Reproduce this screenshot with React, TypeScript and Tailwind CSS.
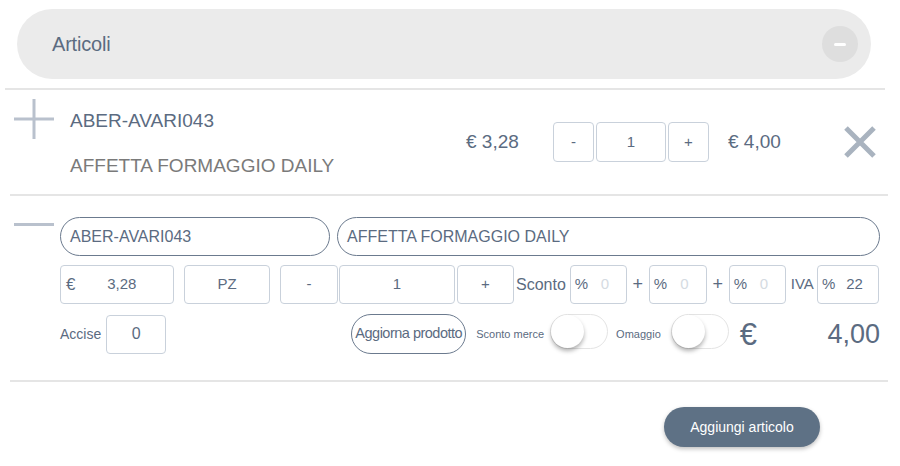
import React, { useState } from "react";

const box =
  "flex h-[39px] items-center justify-center rounded-[4px] border border-[#c9d1db] bg-white text-[15px] text-[#5b6b81]";

function Toggle({ on, onChange }: { on: boolean; onChange: () => void }) {
  return (
    <button
      type="button"
      onClick={onChange}
      className="relative h-[35px] w-[58px] rounded-full border border-[#e4e4e4] bg-white"
    >
      <span
        className={[
          "absolute top-[0px] h-[33px] w-[33px] rounded-full bg-white shadow-[0_3px_4px_rgba(0,0,0,0.3)]",
          on ? "left-[23px]" : "left-[0px]",
        ].join(" ")}
      />
    </button>
  );
}

function PercentBox({ value, width }: { value: string; width: string }) {
  return (
    <div className={`${box} ${width} justify-start px-[4px]`}>
      <span className="text-[15px]">%</span>
      <span className={`flex-1 text-center ${value === "0" ? "text-[#d5dbe2]" : ""}`}>{value}</span>
    </div>
  );
}

export default function App() {
  const [qty, setQty] = useState(1);
  const [scontoMerce, setScontoMerce] = useState(false);
  const [omaggio, setOmaggio] = useState(false);

  return (
    <div className="h-[466px] w-[900px] bg-white font-['Liberation_Sans',Arial,sans-serif] text-[#5b6b81]">
      {/* header */}
      <div className="pl-[17px] pt-[9px]">
        <div className="flex h-[70px] w-[854px] items-center justify-between rounded-full bg-[#ebebeb] pl-[35px] pr-[13px]">
          <span className="text-[20px] tracking-[-0.2px]">Articoli</span>
          <span className="flex h-[36px] w-[36px] items-center justify-center rounded-full bg-[#dedede]">
            <span className="h-[3px] w-[12px] rounded bg-white" />
          </span>
        </div>
      </div>
      <div className="ml-[5px] mt-[9px] h-[2px] w-[880px] bg-[#e5e5e5]" />

      {/* article row */}
      <div className="flex h-[104px] items-center pl-[14px] pr-[23px]">
        <div className="flex w-[452px] self-start">
          <svg width="40" height="40" viewBox="0 0 40 40" className="mt-[9px]">
            <path d="M20 0V40M0 20H40" stroke="#b9c1cd" strokeWidth="3" />
          </svg>
          <div className="ml-[16px] text-[19px]">
            <div className="mt-[19px] leading-[24px]">ABER-AVARI043</div>
            <div className="mt-[21px] leading-[24px] text-[#7a7a7a]">AFFETTA FORMAGGIO DAILY</div>
          </div>
        </div>
        <div className="w-[87px] text-[19px]">€ 3,28</div>
        <div className="flex h-[40px]">
          <button
            type="button"
            onClick={() => setQty(Math.max(0, qty - 1))}
            className="w-[41px] rounded-[4px] border border-[#c9d1db] text-[15px]"
          >
            -
          </button>
          <div className="ml-[2px] flex w-[70px] items-center justify-center rounded-[4px] border border-[#c9d1db] text-[15px]">
            {qty}
          </div>
          <button
            type="button"
            onClick={() => setQty(qty + 1)}
            className="ml-[2px] w-[41px] rounded-[4px] border border-[#c9d1db] text-[15px]"
          >
            +
          </button>
        </div>
        <div className="ml-[19px] text-[19px]">€ 4,00</div>
        <svg width="34" height="34" viewBox="0 0 34 34" className="ml-auto">
          <path d="M3 3L31 31M31 3L3 31" stroke="#a9b3bf" strokeWidth="5" />
        </svg>
      </div>
      <div className="ml-[10px] h-[2px] w-[878px] bg-[#e5e5e5]" />

      {/* edit section */}
      <div className="flex pl-[14px]">
        <div className="w-[46px] pt-[27px]">
          <div className="h-[3px] w-[40px] bg-[#b9c1cd]" />
        </div>
        <div className="w-[820px] pt-[21px]">
          <div className="flex gap-[7px]">
            <div className="flex h-[39px] w-[270px] items-center rounded-full border border-[#6b7a8e] pl-[9px] text-[16px]">
              ABER-AVARI043
            </div>
            <div className="flex h-[39px] w-[543px] items-center rounded-full border border-[#6b7a8e] pl-[9px] text-[16px]">
              AFFETTA FORMAGGIO DAILY
            </div>
          </div>

          <div className="mt-[9px] flex items-center">
            <div className={`${box} w-[114px] justify-start px-[5px]`}>
              <span className="text-[17px]">€</span>
              <span className="flex-1 text-center">3,28</span>
            </div>
            <div className={`${box} ml-[10px] w-[86px]`}>PZ</div>
            <div className={`${box} ml-[10px] w-[58px]`}>-</div>
            <div className={`${box} ml-[1px] w-[116px]`}>{qty}</div>
            <div className={`${box} ml-[2px] w-[57px]`}>+</div>
            <span className="ml-[2px] text-[16px]">Sconto</span>
            <div className="ml-[4px]">
              <PercentBox value="0" width="w-[57px]" />
            </div>
            <span className="w-[22px] text-center text-[18px]">+</span>
            <PercentBox value="0" width="w-[58px]" />
            <span className="w-[22px] text-center text-[18px]">+</span>
            <PercentBox value="0" width="w-[57px]" />
            <span className="ml-[5px] text-[15px]">IVA</span>
            <div className="ml-[3px]">
              <PercentBox value="22" width="w-[62px]" />
            </div>
          </div>

          <div className="mt-[10px] flex h-[40px] items-center">
            <span className="text-[14px]">Accise</span>
            <div className={`${box} ml-[5px] h-[38px] w-[60px] text-[16px]`}>0</div>
            <button
              type="button"
              className="ml-[185px] h-[40px] w-[115px] whitespace-nowrap rounded-full border border-[#6b7a8e] text-[14.5px] tracking-[-0.5px]"
            >
              Aggiorna prodotto
            </button>
            <span className="ml-[10px] text-[11px]">Sconto merce</span>
            <span className="ml-[6px]">
              <Toggle on={scontoMerce} onChange={() => setScontoMerce(!scontoMerce)} />
            </span>
            <span className="ml-[8px] text-[11px]">Omaggio</span>
            <span className="ml-[10px]">
              <Toggle on={omaggio} onChange={() => setOmaggio(!omaggio)} />
            </span>
            <span className="ml-[11px] text-[31px] leading-none">€</span>
            <span className="ml-auto text-[27px] leading-none">4,00</span>
          </div>
        </div>
      </div>
      <div className="ml-[10px] mt-[26px] h-[2px] w-[878px] bg-[#e5e5e5]" />

      <div className="flex pl-[664px] pt-[25px]">
        <button
          type="button"
          className="h-[40px] w-[156px] rounded-full bg-[#5e7185] text-[14px] text-white shadow-[0_2px_4px_rgba(0,0,0,0.25)]"
        >
          Aggiungi articolo
        </button>
      </div>
    </div>
  );
}
